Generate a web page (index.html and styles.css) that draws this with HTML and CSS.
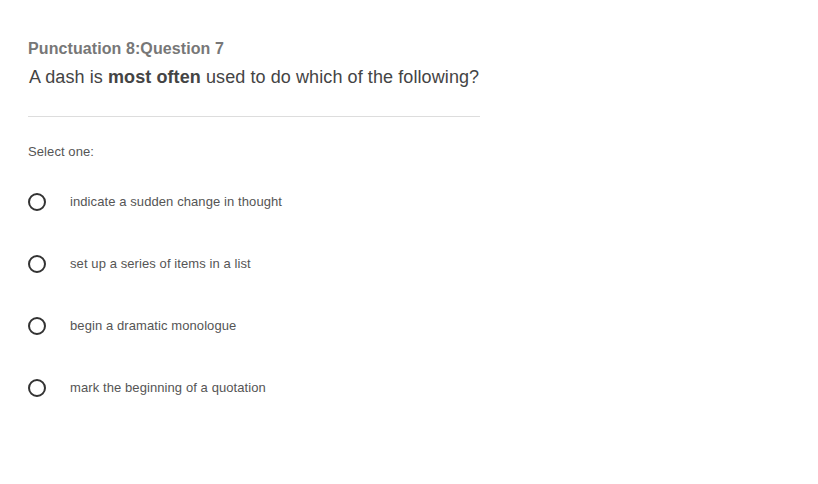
FILE: index.html
```html
<!DOCTYPE html>
<html>
<head>
<meta charset="utf-8">
<link rel="stylesheet" href="styles.css">
</head>
<body>
<div class="quiz">
  <div class="qhead">
    <div class="qtitle">Punctuation 8:Question 7</div>
    <div class="qtext">A dash is <b>most often</b> used to do which of the following?</div>
  </div>
  <div class="divider"></div>
  <div class="prompt">Select one:</div>
  <div class="options">
    <label class="option"><span class="radio"></span><span class="otext">indicate a sudden change in thought</span></label>
    <label class="option"><span class="radio"></span><span class="otext">set up a series of items in a list</span></label>
    <label class="option"><span class="radio"></span><span class="otext">begin a dramatic monologue</span></label>
    <label class="option"><span class="radio"></span><span class="otext">mark the beginning of a quotation</span></label>
  </div>
</div>
</body>
</html>
```
FILE: styles.css
```css
html, body {
  margin: 0;
  padding: 0;
  background: #fff;
}
body {
  font-family: "Liberation Sans", Arial, sans-serif;
  letter-spacing: 0.09px;
}
.quiz {
  padding: 39px 28px 0 28px;
  width: 452px;
}
.qtitle {
  font-size: 16px;
  font-weight: bold;
  color: #777;
  line-height: 20px;
}
.qtext {
  font-size: 18px;
  color: #444;
  line-height: 24px;
  margin-top: 6px;
  padding-left: 1px;
}
.qtext b {
  color: #444;
}
.divider {
  height: 1px;
  background: #ddd;
  margin-top: 27px;
}
.prompt {
  font-size: 13px;
  color: #555;
  line-height: 16px;
  margin-top: 27px;
}
.options {
  display: flex;
  flex-direction: column;
  gap: 44px;
  margin-top: 33px;
}
.option {
  display: flex;
  align-items: center;
  height: 18px;
}
.radio {
  width: 14px;
  height: 14px;
  border: 2px solid #333;
  border-radius: 50%;
  flex: none;
}
.otext {
  font-size: 13px;
  color: #555;
  margin-left: 24px;
  line-height: 16px;
}
```
